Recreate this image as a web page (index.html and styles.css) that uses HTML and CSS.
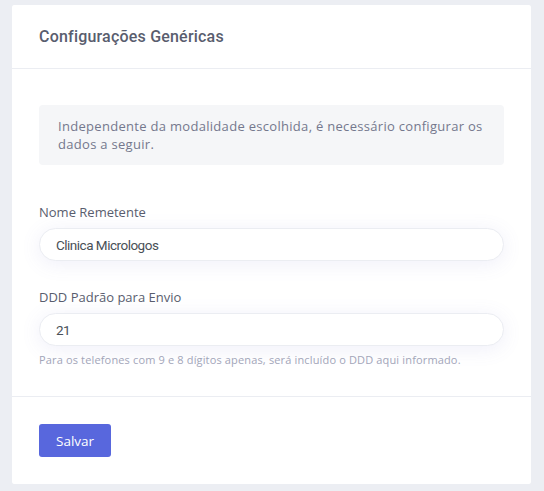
FILE: index.html
```html
<!DOCTYPE html>
<html lang="pt-BR">
<head>
  <meta charset="UTF-8" />
  <title>Configurações Genéricas</title>
  <link rel="stylesheet" href="styles.css">
</head>
<body>
  <div class="portlet">
    <div class="portlet-head">
      <h3 class="portlet-title">Configurações Genéricas</h3>
    </div>

    <div class="portlet-body">
      <div class="alert">
        Independente da modalidade escolhida, é necessário configurar os dados a seguir.
      </div>

      <div class="form-group">
        <label class="label" for="remetente">Nome Remetente</label>
        <input class="input" id="remetente" type="text" value="Clinica Micrologos" />
      </div>

      <div class="form-group">
        <label class="label" for="ddd">DDD Padrão para Envio</label>
        <input class="input" id="ddd" type="text" value="21" />
        <span class="help">Para os telefones com 9 e 8 dígitos apenas, será incluído o DDD aqui informado.</span>
      </div>
    </div>

    <div class="portlet-foot">
      <button class="button">Salvar</button>
    </div>
  </div>
</body>
</html>
```

FILE: styles.css
```css
body {
  font-family: 'Open Sans', 'Noto Sans', sans-serif;
  background: #eceef3;
  margin: 5px 13px 0 12px;
  padding: 0;
  color: #595d6e;
}
.portlet {
  background: #fff;
  box-shadow: 0 0 13px 0 rgba(82, 63, 105, 0.06);
  border-radius: 2px;
}
.portlet-head {
  height: 63px;
  display: flex;
  align-items: center;
  padding: 0 27px;
  border-bottom: 1px solid #ebedf2;
}
.portlet-title {
  margin: 0;
  font-family: Roboto, 'Liberation Sans', sans-serif;
  font-size: 16px;
  font-weight: 500;
  letter-spacing: 0.2px;
  color: #595d6e;
}
.portlet-body {
  padding: 36px 27px 28px;
}
.alert {
  background: #f5f6f8;
  border-radius: 4px;
  padding: 12px 19px;
  font-size: 13px;
  letter-spacing: 0.3px;
  line-height: 18px;
  color: #74788d;
  margin-bottom: 37px;
}
.form-group {
  display: flex;
  flex-direction: column;
  margin-bottom: 26px;
}
.form-group:last-child {
  margin-bottom: 0;
}
.label {
  font-size: 13px;
  line-height: 20px;
  color: #595d6e;
  margin-bottom: 6px;
}
.input {
  height: 33px;
  box-sizing: border-box;
  border: 1px solid #ebedf2;
  border-radius: 17px;
  padding: 0 16px;
  font-family: Roboto, 'Liberation Sans', sans-serif;
  font-size: 13.5px;
  letter-spacing: -0.5px;
  color: #495057;
  background: #fff;
  box-shadow: 0 3px 20px 0 rgba(113, 106, 202, 0.11);
  outline: none;
}
.help {
  font-size: 11px;
  letter-spacing: 0.15px;
  line-height: 16px;
  color: #a2a5b9;
  margin-top: 6px;
}
.portlet-foot {
  border-top: 1px solid #ebedf2;
  padding: 27px;
}
.button {
  height: 33px;
  padding: 0 17px;
  border: none;
  border-radius: 3px;
  background-color: #5867dd;
  color: #fff;
  font-family: 'Open Sans', sans-serif;
  font-size: 13.5px;
  cursor: pointer;
}
```
